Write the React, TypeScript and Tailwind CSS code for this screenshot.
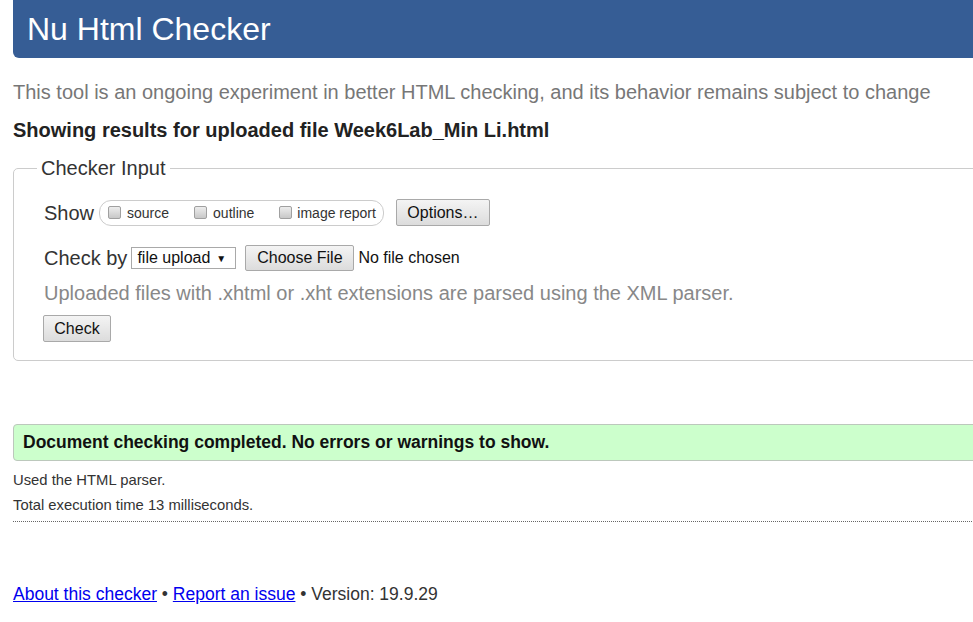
import React from "react";

function Box() {
  return (
    <span className="inline-block w-[13px] h-[13px] rounded-[2px] border border-[#a0a0a0] bg-gradient-to-b from-[#ededed] to-[#c8c8c8] self-start mt-[3px]" />
  );
}

function Btn({ children, className = "" }: { children: React.ReactNode; className?: string }) {
  return (
    <div
      className={
        "flex items-center justify-center border border-[#a9a9a9] rounded-[2px] bg-gradient-to-b from-[#f4f4f4] to-[#dcdcdc] text-[16px] text-[#111] " +
        className
      }
    >
      {children}
    </div>
  );
}

export default function App() {
  return (
    <div className="w-[973px] h-[622px] overflow-hidden bg-white font-['Liberation_Sans',Arial,sans-serif]">
      <div className="w-[1010px] pl-[13px]">
        <div className="h-[58px] bg-[#365d95] rounded-b-[6px] flex items-center pl-[14px] text-[32px] text-white leading-none">
          Nu Html Checker
        </div>
        <p className="mt-[23px] text-[20px] leading-[23px] text-[#777]">
          This tool is an ongoing experiment in better HTML checking, and its behavior remains subject to change
        </p>
        <p className="mt-[15px] text-[20px] leading-[23px] font-bold text-[#222]">
          Showing results for uploaded file Week6Lab_Min Li.html
        </p>
        <fieldset className="mt-[15px] border border-[#ccc] rounded-[5px] pb-[18px]">
          <legend className="ml-[23px] px-[4px] text-[20px] leading-[23px] text-[#333]">Checker Input</legend>
          <div className="mt-[19px] flex items-center h-[27px] pl-[30px]">
            <span className="text-[20px] text-[#333]">Show</span>
            <div className="ml-[5px] h-[26px] rounded-[12px] border border-[#ccc] flex items-center pl-[8px] pr-[7px] text-[14px] text-[#333]">
              <div className="flex h-[19px] items-end">
                <Box />
                <span className="ml-[6px] leading-[17px]">source</span>
              </div>
              <div className="flex h-[19px] items-end ml-[25px]">
                <Box />
                <span className="ml-[6px] leading-[17px]">outline</span>
              </div>
              <div className="flex h-[19px] items-end ml-[25px]">
                <Box />
                <span className="ml-[5px] leading-[17px]">image report</span>
              </div>
            </div>
            <Btn className="ml-[12px] w-[94px] h-[27px]">Options…</Btn>
          </div>
          <div className="mt-[19px] flex items-center h-[26px] pl-[30px]">
            <span className="text-[20px] text-[#333]">Check by</span>
            <div className="ml-[4px] w-[105px] h-[22px] border border-[#a9a9a9] bg-white flex items-center pl-[5px] text-[16px] text-[#111]">
              file upload
              <span className="ml-[6px] text-[10px]">▼</span>
            </div>
            <Btn className="ml-[9px] w-[109px] h-[26px]">Choose File</Btn>
            <span className="ml-[4px] text-[16px] text-[#111]">No file chosen</span>
          </div>
          <p className="mt-[11px] pl-[30px] text-[20px] leading-[23px] text-[#888]">
            Uploaded files with .xhtml or .xht extensions are parsed using the XML parser.
          </p>
          <div className="mt-[10px] pl-[29px]">
            <Btn className="w-[68px] h-[27px]">Check</Btn>
          </div>
        </fieldset>
        <div className="mt-[63px] h-[37px] border border-[#bcc8bc] bg-[#ccffcc] rounded-l-[4px] flex items-center pl-[9px] text-[17.5px] font-bold text-[#111]">
          Document checking completed. No errors or warnings to show.
        </div>
        <p className="mt-[11px] text-[14.8px] leading-[17px] text-[#333]">Used the HTML parser.</p>
        <p className="mt-[8px] text-[14.8px] leading-[17px] text-[#333]">Total execution time 13 milliseconds.</p>
        <div className="mt-[7px] border-t border-dotted border-[#666]" />
        <p className="mt-[62px] text-[17.5px] leading-[21px] text-[#333]">
          <a href="#" className="text-[#0000ee] underline">About this checker</a>
          {" • "}
          <a href="#" className="text-[#0000ee] underline">Report an issue</a>
          {" • Version: 19.9.29"}
        </p>
      </div>
    </div>
  );
}
